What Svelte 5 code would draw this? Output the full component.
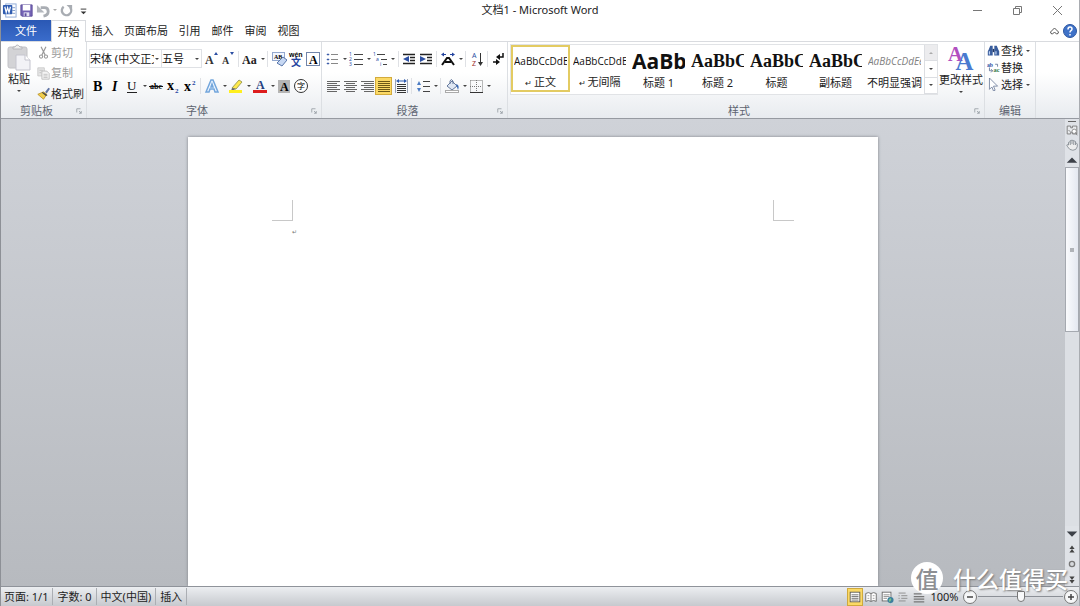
<script lang="ts">
  type Tool = { icon?: string; label?: string; split?: boolean; sep?: boolean; active?: boolean };

  const tabs = ['开始', '插入', '页面布局', '引用', '邮件', '审阅', '视图'];

  const sep: Tool = { sep: true };

  const fontRow1: Tool[] = [
    { icon: 'grow', label: '增大字体' },
    { icon: 'shrink', label: '缩小字体' },
    sep,
    { icon: 'case', label: '更改大小写', split: true },
    sep,
    { icon: 'clear', label: '清除格式' },
    { icon: 'pinyin', label: '拼音指南' },
    { icon: 'boxed', label: '字符边框' }
  ];

  const fontRow2: Tool[] = [
    { icon: 'bold', label: '加粗' },
    { icon: 'italic', label: '倾斜' },
    { icon: 'underline', label: '下划线', split: true },
    { icon: 'strike', label: '删除线' },
    { icon: 'sub', label: '下标' },
    { icon: 'sup', label: '上标' },
    sep,
    { icon: 'effects', label: '文本效果', split: true },
    { icon: 'highlight', label: '突出显示', split: true },
    { icon: 'color', label: '字体颜色', split: true },
    { icon: 'shade', label: '字符底纹' },
    { icon: 'circled', label: '带圈字符' }
  ];

  const paraRow1: Tool[] = [
    { icon: 'bullets', label: '项目符号', split: true },
    { icon: 'numbers', label: '编号', split: true },
    { icon: 'levels', label: '多级列表', split: true },
    sep,
    { icon: 'outdent', label: '减少缩进量' },
    { icon: 'indent', label: '增加缩进量' },
    sep,
    { icon: 'asian', label: '中文版式', split: true },
    sep,
    { icon: 'sort', label: '排序' },
    sep,
    { icon: 'marks', label: '显示编辑标记' }
  ];

  const paraRow2: Tool[] = [
    { icon: 'left', label: '左对齐' },
    { icon: 'center', label: '居中' },
    { icon: 'right', label: '右对齐' },
    { icon: 'justify', label: '两端对齐', active: true },
    { icon: 'distribute', label: '分散对齐' },
    sep,
    { icon: 'spacing', label: '行距', split: true },
    sep,
    { icon: 'bucket', label: '底纹', split: true },
    { icon: 'borders', label: '边框', split: true }
  ];

  const styles = [
    { sample: 'AaBbCcDdEe', name: '正文', kind: 'body', mark: true },
    { sample: 'AaBbCcDdEe', name: '无间隔', kind: 'body', mark: true },
    { sample: 'AaBbCc', name: '标题 1', kind: 'h1' },
    { sample: 'AaBbCc', name: '标题 2', kind: 'h2' },
    { sample: 'AaBbCc', name: '标题', kind: 'h2' },
    { sample: 'AaBbCc', name: '副标题', kind: 'h2' },
    { sample: 'AaBbCcDdEe', name: '不明显强调', kind: 'subtle' }
  ];

  const views = [
    { icon: 'viewPrint', label: '页面视图' },
    { icon: 'viewRead', label: '阅读版式视图' },
    { icon: 'viewWeb', label: 'Web 版式视图' },
    { icon: 'viewOutline', label: '大纲视图' },
    { icon: 'viewDraft', label: '草稿' }
  ];

  let selected = $state(0);
  let view = $state(0);
  let zoom = $state(100);

  const serif = 'font-family="Liberation Serif, serif" font-weight="bold"';
  const sans = 'font-family="Noto Sans, sans-serif"';
  const cjk = 'font-family="Noto Sans CJK SC, sans-serif"';

  const icons: Record<string, string> = {
    word: `<rect x="4" y="1" width="11" height="14" fill="#fff" stroke="#8ea9d6"/><path d="M11 5h3M11 8h3M11 11h3" stroke="#7f9bcb"/><rect x="1" y="2" width="10" height="10" rx="1" fill="#2f5cb0"/><path d="M3 4l1.5 6L6 5l1.5 5L9 4" fill="none" stroke="#fff" stroke-width="1.3"/>`,
    save: `<path d="M2 2h12v12H3l-1-1z" fill="#7563b5" stroke="#5d4e9b"/><rect x="4" y="2" width="8" height="6" fill="#fff"/><rect x="5" y="10" width="6" height="4" fill="#e6e2f4"/><rect x="6" y="11" width="2" height="3" fill="#5d4e9b"/>`,
    undo: `<path d="M5 5h4q4 0 4 4t-5 5" fill="none" stroke="#a9adb3" stroke-width="3"/><path d="M1 2v8h8z" fill="#b4b8be"/>`,
    redo: `<path d="M5 4a5 5 0 1 0 7 1" fill="none" stroke="#a9adb3" stroke-width="2.5"/><path d="M8 2h6v6z" fill="#a9adb3"/>`,
    customize: `<path d="M5 6.500h6" stroke="#333"/><path d="M5 9h6l-3 3z" fill="#333"/>`,
    cut: `<path d="M5 1l5 10M11 1L6 11" stroke="#999" stroke-width="1.5"/><circle cx="5" cy="13" r="2" fill="none" stroke="#999" stroke-width="1.3"/><circle cx="11" cy="13" r="2" fill="none" stroke="#999" stroke-width="1.3"/>`,
    copy: `<path d="M1 1h8v10H1z" fill="#e6e6e6" stroke="#c6c6c6"/><path d="M6 5h6l3 3v7H6z" fill="#f4f4f4" stroke="#b8b8b8"/><path d="M3 4h4M3 7h2M8 9h5M8 11h5M8 13h5" stroke="#bbb"/>`,
    brush: `<path d="M10 6l4-5 2 1-4 6z" fill="#6477a6"/><path d="M1 9l7-3 4 3-4 6z" fill="#f1cf4d" stroke="#b78e20"/><path d="M7 6l6 4-2 1-5-4z" fill="#444"/>`,
    grow: `<text x="2" y="13" font-size="12" fill="#333" ${serif}>A</text><path d="M11 4l2-3 2 3z" fill="#2c4fa3"/>`,
    shrink: `<text x="2" y="13" font-size="10" fill="#333" ${serif}>A</text><path d="M10 1h4l-2 3z" fill="#2c4fa3"/>`,
    case: `<text x="0" y="13" font-size="12" fill="#222" ${serif}>Aa</text>`,
    clear: `<rect x="1.500" y="1.500" width="12" height="8" fill="#f3f7ff" stroke="#93a8cf"/><text x="3" y="8" font-size="6" ${serif}>AB</text><path d="M6 12l6-6 4 3-5 6z" fill="#c7d8f3" stroke="#5876aa"/>`,
    pinyin: `<text x="1" y="6" font-size="7" font-family="Liberation Sans, sans-serif" font-weight="bold">wén</text><text x="3" y="15" font-size="10" fill="#2445a0" font-weight="bold" ${cjk}>文</text>`,
    boxed: `<rect x="1.500" y="1.500" width="13" height="13" fill="#fff" stroke="#7185aa"/><text x="4" y="13" font-size="12" ${serif}>A</text>`,
    bold: `<text x="3" y="13" font-size="14" ${serif}>B</text>`,
    italic: `<text x="5" y="13" font-size="14" font-style="italic" ${serif}>I</text>`,
    underline: `<text x="3" y="12" font-size="13" font-family="Liberation Serif, serif">U</text><path d="M3 14.500h10" stroke="#222"/>`,
    strike: `<text x="2" y="11" font-size="8" ${serif}>abc</text><path d="M1 8.500h14" stroke="#111"/>`,
    sub: `<text x="2" y="12" font-size="14" ${serif}>x</text><text x="10" y="15" font-size="7" fill="#2445a0" ${serif}>2</text>`,
    sup: `<text x="2" y="13" font-size="14" ${serif}>x</text><text x="10" y="7" font-size="7" fill="#2445a0" ${serif}>2</text>`,
    effects: `<path d="M2 14L7 2h2l5 12h-3l-1-3H6l-1 3zM7 9h2L8 6z" fill="#eef6ff" stroke="#73a6dc" stroke-width="1.5"/>`,
    highlight: `<path d="M4 10l7-8 3 2-6 7z" fill="#ffe94a" stroke="#a0a05a"/><path d="M4 10l4 1-5 2z" fill="#666"/><rect x="1" y="12" width="13" height="3" fill="#ffef1f"/>`,
    color: `<text x="4" y="11" font-size="12" fill="#24407f" ${serif}>A</text><rect x="1" y="12" width="14" height="3" fill="#dd1d1d"/>`,
    shade: `<rect x="2" y="2" width="12" height="13" fill="#b5b5b5"/><text x="4" y="13" font-size="12" ${serif}>A</text>`,
    circled: `<circle cx="8" cy="8" r="6.500" fill="#fff" stroke="#333"/><text x="4" y="11" font-size="8" ${cjk}>字</text>`,
    bullets: `<path d="M7 3.500h7M7 8.500h7M7 12.500h7" stroke="#888"/><path d="M3 3h2v1H3zM3 8h2v1H3zM3 12h2v1H3z" fill="#3f5ea8" stroke="#3f5ea8" stroke-width=".5"/>`,
    numbers: `<path d="M6 3.500h9M6 8.500h9M6 13.500h9" stroke="#444"/><g font-size="5" fill="#2b4ea5" ${sans}><text x="1" y="5">1</text><text x="1" y="10">2</text><text x="1" y="15">3</text></g>`,
    levels: `<path d="M5 3.500h8M9 8.500h6M11 13.500h4" stroke="#444"/><g font-size="5" fill="#2b4ea5" ${sans}><text x="1" y="5">1</text><text x="4" y="10">a</text><text x="8" y="15">i</text></g>`,
    outdent: `<path d="M2 3.500h12M9 6.500h5M9 9.500h5M2 12.500h12" stroke="#222" stroke-width="1.5"/><path d="M8 5v6L2 8z" fill="#2c4fa3"/>`,
    indent: `<path d="M2 3.500h12M9 6.500h5M9 9.500h5M2 12.500h12" stroke="#222" stroke-width="1.5"/><path d="M2 5v6l6-3z" fill="#2c4fa3"/>`,
    asian: `<path d="M2 14L7 7h2l5 7M5 11h6" fill="none" stroke="#111" stroke-width="2"/><path d="M1 3.500l3-2v1.500h2v1H4v1.500zM15 3.500l-3-2v1.500h-2v1h2v1.500z" fill="#2445a0"/>`,
    sort: `<text x="3" y="7" font-size="7" fill="#2c4fa3" ${sans}>A</text><text x="3" y="15" font-size="7" fill="#9c2f2f" ${sans}>Z</text><path d="M11.500 2v11" stroke="#333"/><path d="M9 11h5l-2.500 4z" fill="#333"/>`,
    marks: `<path d="M12 2v4H8" fill="none" stroke="#111" stroke-width="1.5"/><path d="M9 3v6L5 6zM5 8v6l4-3z" fill="#111"/><path d="M2 11h4" stroke="#111" stroke-width="1.5"/>`,
    left: `<path d="M2 3.500h13M2 5.500h10M2 7.500h13M2 9.500h10M2 11.500h13M2 13.500h10" stroke="#666"/>`,
    center: `<path d="M2 3.500h13M4 5.500h9M2 7.500h13M4 9.500h9M2 11.500h13M4 13.500h9" stroke="#666"/>`,
    right: `<path d="M2 3.500h13M5 5.500h10M2 7.500h13M5 9.500h10M2 11.500h13M5 13.500h10" stroke="#666"/>`,
    justify: `<path d="M2 3.500h12M2 5.500h12M2 7.500h12M2 9.500h12M2 11.500h12M2 13.500h12" stroke="#6e5a16"/>`,
    distribute: `<path d="M4 6.500h9M4 8.500h9M4 10.500h9M4 12.500h9M4 14.500h9" stroke="#333"/><path d="M2.500 1v14M14.500 1v14" stroke="#9aa3b5"/><path d="M3 3l3-2v1.500h5V1l3 2-3 2V3.500H6V5z" fill="#2f5cb0"/>`,
    spacing: `<path d="M8 3.500h7M8 8.500h7M8 13.500h7" stroke="#444"/><path d="M2 7l2-4 2 4zM2 10h4l-2 4z" fill="#4c7cc4"/>`,
    bucket: `<path d="M3 8l5-5 5 5-5 4z" fill="#dfe7f3" stroke="#64789c"/><path d="M6 6V3q1-3 3 0v3" fill="none" stroke="#64789c"/><path d="M12 6q4 1 2 6z" fill="#3767b4"/><rect x="1.500" y="12.500" width="13" height="2" fill="#fff" stroke="#aaa"/>`,
    borders: `<path d="M2.500 2.500h12v12M2.500 2.500v12M8.500 2v12M2 8.500h12" fill="none" stroke="#777" stroke-dasharray="1 1"/><path d="M2 14.500h13" stroke="#333"/>`,
    find: `<path d="M2 7l2-5h3v12H1V9zM14 7l-2-5H9v12h6V9z" fill="#385c9c"/><path d="M7 6h2v4H7z" fill="#1f3566"/><path d="M3 9v4M11 9v4" stroke="#bdd2f4" stroke-width="1.5"/>`,
    replace: `<text x="0" y="7" font-size="7" fill="#2c4fa3" ${serif}>ab</text><text x="8" y="14" font-size="8" fill="#357a4a" ${serif}>ac</text><path d="M3 8v4h4M5 10l2 2-2 2M10 4h3v3" fill="none" stroke="#5b6f92"/>`,
    pointer: `<path d="M3 0v14l3-3 2 5 2-1-2-5h5z" fill="#fff" stroke="#6a7a99"/>`,
    viewPrint: `<rect x="2.500" y="2.500" width="11" height="11" fill="#fff" stroke="#555"/><path d="M4 5.500h8M4 7.500h8M4 9.500h8M4 11.500h8" stroke="#666"/>`,
    viewRead: `<path d="M2 4q3-2 6 0 3-2 6 0v9q-3-2-6 0-3-2-6 0zM8 4v9" fill="#fff" stroke="#666"/><path d="M4 6.500h2M4 9.500h2M10 6.500h2M10 9.500h2" stroke="#999"/>`,
    viewWeb: `<rect x="2.500" y="2.500" width="10" height="10" fill="#fff" stroke="#666"/><path d="M4 5.500h7M4 7.500h7M4 9.500h4" stroke="#888"/><circle cx="12" cy="11.500" r="3.500" fill="#3b7f9d"/><path d="M10 11l2-2 1 2-2 3z" fill="#7cc389"/>`,
    viewOutline: `<path d="M3 3.500h8M6 6.500h7M6 9.500h7M3 12.500h8" stroke="#888"/><path d="M3 6.500h1M3 9.500h1" stroke="#666"/>`,
    viewDraft: `<path d="M2 4.500h9M2 7.500h12M2 10.500h12M2 13.500h12" stroke="#777" stroke-width="1.5"/>`,
    minimize: `<path d="M4 8.500h9" stroke="#777"/>`,
    restore: `<path d="M4.500 6.500h6v6h-6zM6.500 6V4.500h6v6H11" fill="none" stroke="#777"/>`,
    close: `<path d="M4 4l9 9M13 4l-9 9" stroke="#777"/>`,
    collapse: `<path d="M4.500 9l4-4 4 4q0 2-2 2l-2-2-2 2q-2 0-2-2z" fill="#fff" stroke="#555"/>`,
    help: `<circle cx="8" cy="8" r="6.500" fill="#3f72c8" stroke="#2c56a0"/><path d="M6 6.500q0-2.500 2-2.500t2 2q0 1-1 1.700T8 9.500M8 11v1.500" fill="none" stroke="#fff" stroke-width="1.5"/>`,
    ruler: `<path d="M2.500 3.500h4v2h2v-2h5v9h-5v-2h-2v2h-4z" fill="#e9ebee" stroke="#777"/><circle cx="10.500" cy="9.500" r="2.500" fill="#fff" stroke="#888"/><path d="M12 11l2 3M4 8l2 2" stroke="#777"/>`,
    hand: `<path d="M4 8V5q1-1 2 0V3q1-1 2 0 1-1 2 0v1q1-1 2 0v2q1-1 2 1v3q-1 4-5 4t-6-4l-1-2q1-1 2 0zM6 5v3M8 3v4M10 4v4M12 6v2" fill="#eee" stroke="#848a91"/>`,
    up: `<path d="M2 11h12L8 5z" fill="#3d4148"/>`,
    down: `<path d="M2 5h12l-6 6z" fill="#3d4148"/>`,
    prev: `<path d="M5 8h6L8 4zM5 12h6L8 8z" fill="#444"/>`,
    next: `<path d="M5 5h6L8 9zM5 9h6l-3 4z" fill="#444"/>`,
    browse: `<circle cx="8" cy="8" r="3" fill="#d6d9dd" stroke="#777" stroke-width="1.5"/>`,
    minus: `<circle cx="8" cy="8" r="6.500" fill="#f6f7f8" stroke="#777"/><path d="M5 8h6" stroke="#444" stroke-width="1.5"/>`,
    plus: `<circle cx="8" cy="8" r="6.500" fill="#f6f7f8" stroke="#777"/><path d="M5 8h6M8 5v6" stroke="#444" stroke-width="1.5"/>`
  };
</script>

{#snippet icon(name: string)}
  <svg class="icon" viewBox="0 0 16 16" aria-hidden="true">{@html icons[name]}</svg>
{/snippet}

{#snippet tools(list: Tool[])}
  {#each list as tool}
    {#if tool.sep}
      <span class="sep"></span>
    {:else}
      <button class="tool" class:split={tool.split} class:active={tool.active} aria-label={tool.label}>
        {@render icon(tool.icon ?? '')}
        {#if tool.split}<i class="caret"></i>{/if}
      </button>
    {/if}
  {/each}
{/snippet}

{#snippet launcher(label: string)}
  <button class="launcher" aria-label={label}>
    <svg viewBox="0 0 8 8" width="6" height="6"><path d="M1 6V1h5M4 4l3 3M7 4v3H4" fill="none" stroke="#8f959e" /></svg>
  </button>
{/snippet}

<div class="window">
  <header class="titlebar">
    <div class="quick">
      <button aria-label="Word">{@render icon('word')}</button>
      <button aria-label="保存">{@render icon('save')}</button>
      <button aria-label="撤消">{@render icon('undo')}</button>
      <i class="caret pale"></i>
      <button aria-label="恢复">{@render icon('redo')}</button>
      <button aria-label="自定义快速访问工具栏">{@render icon('customize')}</button>
    </div>
    <h1>文档1 - Microsoft Word</h1>
    <div class="controls">
      <button aria-label="最小化">{@render icon('minimize')}</button>
      <button aria-label="还原">{@render icon('restore')}</button>
      <button aria-label="关闭">{@render icon('close')}</button>
    </div>
  </header>

  <nav class="tabs">
    <button class="file">文件</button>
    {#each tabs as tab, i}
      <button class="tab" class:current={i === 0} class:long={tab.length > 2}>{tab}</button>
    {/each}
    <div class="tab-end">
      <button aria-label="功能区最小化">{@render icon('collapse')}</button>
      <button aria-label="帮助">{@render icon('help')}</button>
    </div>
  </nav>

  <div class="ribbon">
    <section class="group clipboard">
      <div class="group-body">
        <button class="paste">
          <svg viewBox="0 0 26 28" width="28" height="28" aria-hidden="true">
            <rect x="2" y="3" width="19" height="21" rx="2" fill="#d3d3d6" stroke="#c2c2c6" />
            <path d="M7 5V3h2q2-4 5 0h2v2z" fill="#eee" stroke="#b5b5ba" />
            <path d="M10 11h9l5 5v10H10z" fill="#f2f2f6" stroke="#c4c4ce" />
            <path d="M19 11v5h5" fill="#fff" stroke="#c4c4ce" />
          </svg>
          <span>粘贴</span>
          <i class="caret"></i>
        </button>
        <div class="stack">
          <button class="text-tool" disabled>{@render icon('cut')}剪切</button>
          <button class="text-tool" disabled>{@render icon('copy')}复制</button>
          <button class="text-tool">{@render icon('brush')}格式刷</button>
        </div>
      </div>
      <footer><span>剪贴板</span>{@render launcher('剪贴板设置')}</footer>
    </section>

    <section class="group font">
      <div class="group-body rows">
        <div class="row">
          <label class="combo face">
            <select aria-label="字体"><option>宋体 (中文正文)</option></select>
            <i class="caret"></i>
          </label>
          <label class="combo size">
            <select aria-label="字号"><option>五号</option></select>
            <i class="caret"></i>
          </label>
          {@render tools(fontRow1)}
        </div>
        <div class="row">{@render tools(fontRow2)}</div>
      </div>
      <footer><span>字体</span>{@render launcher('字体设置')}</footer>
    </section>

    <section class="group para">
      <div class="group-body rows">
        <div class="row">{@render tools(paraRow1)}</div>
        <div class="row">{@render tools(paraRow2)}</div>
      </div>
      <footer><span>段落</span>{@render launcher('段落设置')}</footer>
    </section>

    <section class="group styles">
      <div class="group-body">
        <div class="gallery">
          {#each styles as style, i}
            <button class="style" class:picked={selected === i} onclick={() => (selected = i)}>
              <span class="sample {style.kind}">{style.sample}</span>
              <span class="style-name">{#if style.mark}<small>↵</small>{/if}{style.name}</span>
            </button>
          {/each}
          <div class="gallery-nav">
            <button class="off" aria-label="上一行"><i class="caret flip"></i></button>
            <button aria-label="下一行"><i class="caret"></i></button>
            <button aria-label="其他"><i class="caret bar"></i></button>
          </div>
        </div>
        <button class="change">
          <svg viewBox="0 0 26 26" width="28" height="28" aria-hidden="true">
            <g font-family="Liberation Serif, serif" font-weight="bold">
              <text x="1" y="15" font-size="19" fill="#b14fc0">A</text>
              <text x="8" y="23" font-size="23" fill="#4a7bd0">A</text>
            </g>
          </svg>
          <span>更改样式</span>
          <i class="caret"></i>
        </button>
      </div>
      <footer><span>样式</span>{@render launcher('样式窗口')}</footer>
    </section>

    <section class="group edit">
      <div class="group-body">
        <div class="stack tight">
          <button class="text-tool">{@render icon('find')}查找<i class="caret"></i></button>
          <button class="text-tool">{@render icon('replace')}替换</button>
          <button class="text-tool">{@render icon('pointer')}选择<i class="caret"></i></button>
        </div>
      </div>
      <footer><span>编辑</span></footer>
    </section>
  </div>

  <main class="workspace">
    <div class="canvas">
      <article class="page">
        <div class="margins"><i class="corner"></i><i class="corner end"></i></div>
        <p>↵</p>
      </article>
    </div>
    <aside class="scroll">
      <i class="splitter"></i>
      <button aria-label="标尺">{@render icon('ruler')}</button>
      <button aria-label="平移">{@render icon('hand')}</button>
      <button aria-label="向上滚动">{@render icon('up')}</button>
      <div class="track"><div class="thumb"></div></div>
      <button aria-label="向下滚动">{@render icon('down')}</button>
      <button aria-label="前一页">{@render icon('prev')}</button>
      <button aria-label="选择浏览对象">{@render icon('browse')}</button>
      <button aria-label="下一页">{@render icon('next')}</button>
    </aside>
  </main>

  <footer class="status">
    <button class="info">页面: 1/1</button>
    <button class="info">字数: 0</button>
    <button class="info">中文(中国)</button>
    <button class="info">插入</button>
    <div class="views">
      {#each views as v, i}
        <button class="view" class:on={view === i} aria-label={v.label} onclick={() => (view = i)}>
          {@render icon(v.icon)}
        </button>
      {/each}
    </div>
    <button class="percent">{zoom}%</button>
    <button class="round" aria-label="缩小" onclick={() => (zoom -= 10)}>{@render icon('minus')}</button>
    <input class="zoom" type="range" min="10" max="190" bind:value={zoom} aria-label="显示比例" />
    <button class="round" aria-label="放大" onclick={() => (zoom += 10)}>{@render icon('plus')}</button>
  </footer>

  <div class="watermark">
    <span class="badge">值</span>
    <span>什么值得买</span>
  </div>
</div>

<style>
:global(body) {
  margin: 0;
}

.window {
  position: relative;
  display: flex;
  flex-direction: column;
  height: 100vh;
  min-height: 300px;
  box-sizing: border-box;
  border-left: 1px solid #8d9096;
  border-right: 1px solid #a9acb1;
  background: #fff;
  color: #222;
  font-family: 'Noto Sans', 'Noto Sans CJK SC', sans-serif;
  font-size: 11px;
  line-height: 14px;
  overflow: hidden;
}

button {
  display: flex;
  align-items: center;
  justify-content: center;
  padding: 0;
  border: 0;
  background: none;
  color: inherit;
  font: inherit;
  white-space: nowrap;
}

.icon {
  display: block;
  flex: none;
  width: 16px;
  height: 16px;
}

.caret {
  flex: none;
  width: 0;
  height: 0;
  border: 2px solid transparent;
  border-top-color: #444;
  border-bottom: 0;
}

.caret.pale {
  border-top-color: #aaa;
}

/* title bar */
.titlebar {
  display: grid;
  grid-template-columns: 1fr auto 1fr;
  align-items: center;
  height: 20px;
}

.quick {
  display: flex;
  align-items: center;
  height: 16px;
}

.quick button {
  width: 17px;
}

.quick .icon {
  width: 15px;
  height: 15px;
}

.quick .caret {
  margin: 0 1px;
}

h1 {
  margin: 0;
  font-size: 11px;
  font-weight: 400;
}

.controls {
  display: flex;
  justify-content: flex-end;
  padding-right: 2px;
}

.controls button {
  width: 40px;
  height: 20px;
}

/* tabs */
.tabs {
  display: flex;
  height: 21px;
  border-bottom: 1px solid #d9dbdf;
}

.file {
  width: 50px;
  background: linear-gradient(#2a58b4, #3a6ccb);
  color: #fff;
}

.tab {
  width: 33px;
  box-sizing: border-box;
}

.tab.long {
  width: 54px;
}

.tab.current {
  width: 35px;
  border: 1px solid #d9dbdf;
  border-bottom: 0;
  margin-bottom: -1px;
  background: #fff;
}

.tab-end {
  display: flex;
  margin-left: auto;
  padding-right: 1px;
}

/* ribbon */
.ribbon {
  display: flex;
  height: 76px;
  border-bottom: 1px solid #969aa1;
  background: linear-gradient(#fff 40%, #e8ebef);
}

.group {
  display: flex;
  flex: none;
  flex-direction: column;
  box-sizing: border-box;
  border-right: 1px solid #dcdfe3;
}

.group-body {
  display: flex;
  flex: 1;
}

.group footer {
  display: flex;
  align-items: center;
  height: 15px;
  color: #5d6470;
}

.group footer span {
  flex: 1;
  text-align: center;
}

.launcher {
  width: 14px;
  height: 14px;
}

.clipboard {
  width: 86px;
}

.font {
  width: 235px;
}

.para {
  width: 186px;
}

.styles {
  width: 477px;
}

.edit {
  width: 51px;
}

.paste {
  flex-direction: column;
  justify-content: flex-start;
  width: 36px;
  padding-top: 2px;
}

.paste .caret {
  margin-top: 4px;
}

.stack {
  display: flex;
  flex: 1;
  flex-direction: column;
  justify-content: space-between;
  padding: 2px 0 1px;
}

.stack.tight {
  padding: 0 0 11px 2px;
}

.text-tool {
  justify-content: flex-start;
  height: 17px;
}

.text-tool .icon {
  width: 13px;
  height: 13px;
  margin-right: 1px;
}

.text-tool .caret {
  margin-left: 3px;
}

.text-tool:disabled {
  color: #999;
}

.rows {
  flex-direction: column;
  gap: 8px;
  padding: 7px 0 0 2px;
}

.row {
  display: flex;
  align-items: center;
  height: 19px;
}

.combo {
  position: relative;
  box-sizing: border-box;
  height: 19px;
  border: 1px solid #dfe1e5;
  background: #fff;
}

.combo + .combo {
  border-left: 0;
}

.face {
  width: 73px;
}

.size {
  width: 40px;
}

.combo select {
  width: 100%;
  height: 17px;
  padding: 0 7px 0 0;
  border: 0;
  appearance: none;
  background: none;
  color: #111;
  font: inherit;
  text-overflow: clip;
}

.combo .caret {
  position: absolute;
  top: 8px;
  right: 2px;
}

.tool {
  width: 17px;
  height: 18px;
}

.tool.split {
  gap: 3px;
  width: 24px;
}

.tool.active {
  box-sizing: border-box;
  border: 1px solid #d3ab3c;
  background: #fbd965;
}

.sep {
  width: 1px;
  height: 16px;
  margin: 0 2px;
  background: #dfe1e5;
}

/* style gallery */
.gallery {
  display: flex;
  flex: none;
  box-sizing: border-box;
  height: 51px;
  margin: 2px 0 0 2px;
  border: 1px solid #e1e3e6;
  background: #fff;
}

.style {
  flex-direction: column;
  justify-content: flex-start;
  width: 59px;
  height: 47px;
  box-sizing: border-box;
  padding: 0 1px;
  border: 2px solid transparent;
}

.style.picked {
  border-color: #e3cb62;
}

.sample {
  width: 100%;
  height: 29px;
  line-height: 29px;
  overflow: hidden;
  color: #111;
  text-align: left;
}

.sample.body,
.sample.subtle {
  font-family: 'Open Sans', sans-serif;
  font-size: 10px;
}

.sample.h1 {
  font-family: 'Open Sans', sans-serif;
  font-size: 21px;
  font-weight: 700;
}

.sample.h2 {
  font-family: 'Liberation Serif', serif;
  font-size: 18px;
  font-weight: 700;
}

.sample.subtle {
  color: #808080;
  font-style: italic;
}

.style-name small {
  margin-right: 2px;
  font-size: 8px;
}

.gallery-nav {
  display: flex;
  flex-direction: column;
  width: 12px;
  border-left: 1px solid #dcdee2;
}

.gallery-nav button {
  flex: 1;
  border-bottom: 1px solid #dcdee2;
}

.gallery-nav .off {
  background: #ececee;
}

.caret.flip {
  border-top: 0;
  border-bottom: 2px solid #aaa;
}

.caret.bar {
  box-shadow: 0 -3px 0 -1px #555;
}

.change {
  flex: 1;
  flex-direction: column;
  justify-content: flex-start;
  padding-top: 3px;
}

.change .caret {
  margin-top: 4px;
}

/* document */
.workspace {
  display: flex;
  flex: 1;
  min-height: 0;
  background: linear-gradient(#cfd2d8, #b7babf);
}

.canvas {
  display: flex;
  flex: 1;
  justify-content: center;
  padding-top: 18px;
}

.page {
  flex: 0 1 690px;
  background: #fff;
  box-shadow: 0 0 3px #7e8187;
}

.margins {
  display: flex;
  justify-content: space-between;
  padding: 63px 84px 0;
}

.corner {
  width: 20px;
  height: 20px;
  border-right: 1px solid #c8c8c8;
  border-bottom: 1px solid #c8c8c8;
}

.corner.end {
  border-right: 0;
  border-left: 1px solid #c8c8c8;
}

.page p {
  margin: 4px 104px;
  color: #777;
  font-size: 6px;
}

.scroll {
  display: flex;
  flex-direction: column;
  width: 14px;
  background: #dfe2e7;
}

.splitter {
  height: 1px;
  margin: 2px 3px 0;
  background: #666;
}

.scroll button {
  height: 15px;
}

.scroll .icon {
  width: 14px;
  height: 14px;
}

.track {
  flex: 1;
  background: #dcdfe4;
}

.thumb {
  display: flex;
  align-items: center;
  justify-content: center;
  box-sizing: border-box;
  height: 46%;
  border: 1px solid #a5a9b0;
  background: linear-gradient(90deg, #fafbfd, #e4e8f0);
}

.thumb::after {
  width: 4px;
  height: 4px;
  background: #b0b3b8;
  content: '';
}

/* status bar */
.status {
  display: flex;
  align-items: center;
  height: 19px;
  border-top: 1px solid #8f939a;
  background: linear-gradient(#eceef1, #c6c9ce);
}

.info {
  height: 17px;
  padding: 0 4px;
  border-right: 1px solid #abaeb3;
}

.info:first-child {
  padding-left: 3px;
}

.views {
  display: flex;
  margin-left: auto;
}

.view {
  width: 16px;
  height: 18px;
}

.view .icon {
  width: 14px;
  height: 14px;
}

.view.on {
  background: #fbd965;
  box-shadow: inset 0 0 0 1px #cfa93c;
}

.percent {
  width: 35px;
}

.round {
  width: 16px;
}

.zoom {
  width: 85px;
  height: 16px;
  margin: 0;
  appearance: none;
  background: linear-gradient(#8b8f96, #8b8f96) center / 100% 1px no-repeat;
}

.zoom::-webkit-slider-thumb {
  width: 8px;
  height: 11px;
  appearance: none;
  border: 1px solid #777;
  border-radius: 1px 1px 4px 4px;
  background: #f8f9fa;
}

.watermark {
  position: absolute;
  right: 11px;
  bottom: 12px;
  display: flex;
  align-items: center;
  gap: 10px;
  color: #fff;
  font-family: 'Noto Sans CJK SC', sans-serif;
  font-size: 23px;
  font-weight: 500;
  line-height: 32px;
  text-shadow: 1px 1px 2px #777;
  pointer-events: none;
}

.badge {
  width: 32px;
  height: 32px;
  border-radius: 50%;
  background: #fff;
  color: #8d8f93;
  text-align: center;
  text-shadow: none;
}
</style>
